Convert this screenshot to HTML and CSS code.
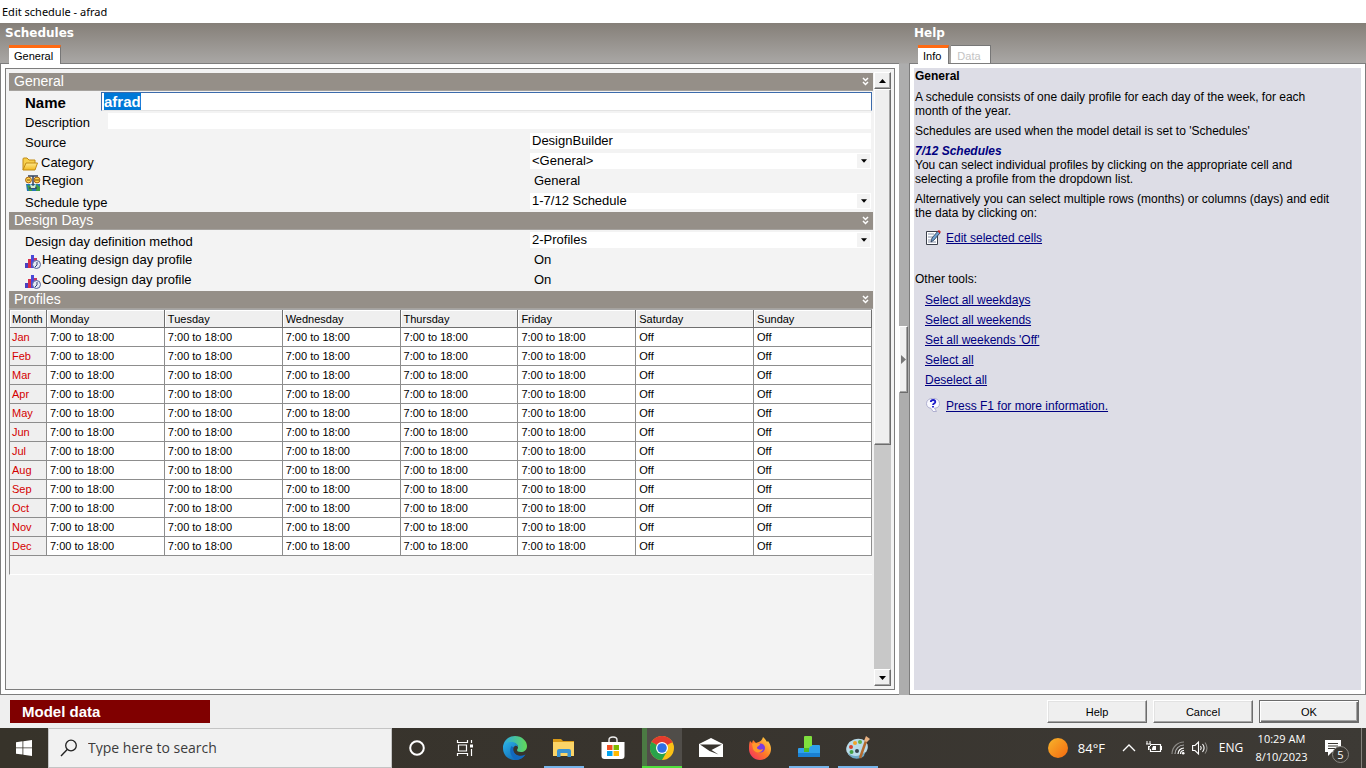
FILE: index.html
```html
<!DOCTYPE html>
<html lang="en">
<head>
<meta charset="utf-8">
<title>Edit schedule - afrad</title>
<link rel="stylesheet" href="styles.css">
</head>
<body>
<svg class="defs" aria-hidden="true">
  <defs>
    <linearGradient id="edgeA" x1="0" y1="0" x2="1" y2="1"><stop offset="0" stop-color="#2bb3e8"/><stop offset="1" stop-color="#0a56a8"/></linearGradient>
    <linearGradient id="edgeB" x1="0" y1="0" x2="1" y2="0"><stop offset="0" stop-color="#2aa8e6"/><stop offset="1" stop-color="#62d957"/></linearGradient>
    <linearGradient id="sun" x1="0" y1="0" x2="1" y2="1"><stop offset="0" stop-color="#f7b52c"/><stop offset="1" stop-color="#f4690f"/></linearGradient>
    <linearGradient id="fox" x1="1" y1="0" x2="0" y2="1"><stop offset="0" stop-color="#ffe14a"/><stop offset=".5" stop-color="#ff7a25"/><stop offset="1" stop-color="#f0246c"/></linearGradient>
    <linearGradient id="folderG" x1="0" y1="0" x2="0" y2="1"><stop offset="0" stop-color="#ffe98a"/><stop offset="1" stop-color="#f2b81f"/></linearGradient>
    <symbol id="chev" viewBox="0 0 7 9"><path d="M1 1l2.500 2.500L6 1M1 5l2.500 2.500L6 5" fill="none" stroke="#fff" stroke-width="1.500"/></symbol>
    <symbol id="down" viewBox="0 0 7 4"><path d="M0 0h7L3.500 4z"/></symbol>
    <symbol id="profile" viewBox="0 0 16 16"><path d="M0 9h4v5H0z" fill="#4a3fc0"/><path d="M3 5h4v9H3z" fill="#d8304a"/><path d="M6 1h3v13H6z" fill="#4a48d8"/><path d="M9 4h3v9H9z" fill="#c23a68"/><circle cx="11.500" cy="10.500" r="4" fill="#e4e9f6" stroke="#526399"/><path d="M12 8v3l-2 2" fill="none" stroke="#30406e"/></symbol>
  </defs>
</svg>
<header class="titlebar">Edit schedule - afrad</header>

<main class="workspace">
  <section class="pane">
    <div class="pane-head">
      <h1>Schedules</h1>
      <div class="tabs"><button class="tab active" type="button">General</button></div>
    </div>
    <div class="panel panel-left">
      <div class="frame">
        <div class="sheet">
          <h2 class="section">General <svg class="chev"><use href="#chev"/></svg></h2>
          <div class="fields">
            <div class="row row-name"><label class="strong" for="name">Name</label><input id="name" class="name" type="text" value="afrad" autofocus></div>
            <div class="row row-desc"><label for="desc">Description</label><input id="desc" type="text" value=""></div>
            <div class="row"><label for="source">Source</label><input id="source" type="text" value="DesignBuilder"></div>
            <div class="row"><label for="category" class="with-icon">
              <svg class="folder" viewBox="0 0 16 14"><path d="M1 13V2q0-1 1-1h3l2 2h6v3" fill="#f7cf4c" stroke="#c18a13"/><path d="M1 13L4 6h11.500L13 13z" fill="url(#folderG)" stroke="#c18a13"/></svg>Category</label>
              <div class="combo"><select id="category"><option>&lt;General&gt;</option></select><span class="arrow"><svg><use href="#down"/></svg></span></div></div>
            <div class="row"><span class="label with-icon raised">
              <svg class="icon" viewBox="0 0 16 16"><path d="M1 9h14v7H2z" fill="#2477b8"/><path d="M2 10l4 1 1 5H4zM11 9l4 3v4h-4z" fill="#3f9e45"/><path d="M3 1h10M8 1v10M4 13h8" stroke="#34435c" stroke-width="1.500"/><circle cx="3.500" cy="5" r="2.900" fill="#ffd54c" stroke="#a9610d"/><circle cx="12" cy="5" r="2.900" fill="#ffd54c" stroke="#a9610d"/><path d="M2 5h3M10 5h4" stroke="#7b4309"/><path d="M5 9l3 2 3-2-1 4H6z" fill="#d5edcf"/></svg>Region</span><span class="static">General</span></div>
            <div class="row"><label for="type">Schedule type</label>
              <div class="combo"><select id="type"><option>1-7/12 Schedule</option></select><span class="arrow"><svg><use href="#down"/></svg></span></div></div>
          </div>

          <h2 class="section">Design Days <svg class="chev"><use href="#chev"/></svg></h2>
          <div class="fields">
            <div class="row"><label for="method">Design day definition method</label>
              <div class="combo"><select id="method"><option>2-Profiles</option></select><span class="arrow"><svg><use href="#down"/></svg></span></div></div>
            <div class="row"><span class="label with-icon raised"><svg class="icon"><use href="#profile"/></svg>Heating design day profile</span><span class="static">On</span></div>
            <div class="row"><span class="label with-icon raised"><svg class="icon"><use href="#profile"/></svg>Cooling design day profile</span><span class="static">On</span></div>
          </div>

          <h2 class="section">Profiles <svg class="chev"><use href="#chev"/></svg></h2>
          <div class="grid-box">
            <table class="profiles">
              <thead><tr><th class="month">Month</th><th>Monday</th><th>Tuesday</th><th>Wednesday</th><th>Thursday</th><th>Friday</th><th>Saturday</th><th>Sunday</th></tr></thead>
              <tbody>
                <tr><th>Jan</th><td>7:00 to 18:00</td><td>7:00 to 18:00</td><td>7:00 to 18:00</td><td>7:00 to 18:00</td><td>7:00 to 18:00</td><td>Off</td><td>Off</td></tr>
                <tr><th>Feb</th><td>7:00 to 18:00</td><td>7:00 to 18:00</td><td>7:00 to 18:00</td><td>7:00 to 18:00</td><td>7:00 to 18:00</td><td>Off</td><td>Off</td></tr>
                <tr><th>Mar</th><td>7:00 to 18:00</td><td>7:00 to 18:00</td><td>7:00 to 18:00</td><td>7:00 to 18:00</td><td>7:00 to 18:00</td><td>Off</td><td>Off</td></tr>
                <tr><th>Apr</th><td>7:00 to 18:00</td><td>7:00 to 18:00</td><td>7:00 to 18:00</td><td>7:00 to 18:00</td><td>7:00 to 18:00</td><td>Off</td><td>Off</td></tr>
                <tr><th>May</th><td>7:00 to 18:00</td><td>7:00 to 18:00</td><td>7:00 to 18:00</td><td>7:00 to 18:00</td><td>7:00 to 18:00</td><td>Off</td><td>Off</td></tr>
                <tr><th>Jun</th><td>7:00 to 18:00</td><td>7:00 to 18:00</td><td>7:00 to 18:00</td><td>7:00 to 18:00</td><td>7:00 to 18:00</td><td>Off</td><td>Off</td></tr>
                <tr><th>Jul</th><td>7:00 to 18:00</td><td>7:00 to 18:00</td><td>7:00 to 18:00</td><td>7:00 to 18:00</td><td>7:00 to 18:00</td><td>Off</td><td>Off</td></tr>
                <tr><th>Aug</th><td>7:00 to 18:00</td><td>7:00 to 18:00</td><td>7:00 to 18:00</td><td>7:00 to 18:00</td><td>7:00 to 18:00</td><td>Off</td><td>Off</td></tr>
                <tr><th>Sep</th><td>7:00 to 18:00</td><td>7:00 to 18:00</td><td>7:00 to 18:00</td><td>7:00 to 18:00</td><td>7:00 to 18:00</td><td>Off</td><td>Off</td></tr>
                <tr><th>Oct</th><td>7:00 to 18:00</td><td>7:00 to 18:00</td><td>7:00 to 18:00</td><td>7:00 to 18:00</td><td>7:00 to 18:00</td><td>Off</td><td>Off</td></tr>
                <tr><th>Nov</th><td>7:00 to 18:00</td><td>7:00 to 18:00</td><td>7:00 to 18:00</td><td>7:00 to 18:00</td><td>7:00 to 18:00</td><td>Off</td><td>Off</td></tr>
                <tr><th>Dec</th><td>7:00 to 18:00</td><td>7:00 to 18:00</td><td>7:00 to 18:00</td><td>7:00 to 18:00</td><td>7:00 to 18:00</td><td>Off</td><td>Off</td></tr>
              </tbody>
            </table>
          </div>
        </div>
        <div class="scroll">
          <button class="scroll-btn" type="button" aria-label="Scroll up"><svg viewBox="0 0 7 4"><path d="M0 4h7L3.500 0z"/></svg></button>
          <div class="thumb"></div>
          <div class="track"></div>
          <button class="scroll-btn" type="button" aria-label="Scroll down"><svg viewBox="0 0 7 4"><path d="M0 0h7L3.500 4z"/></svg></button>
        </div>
      </div>
    </div>
  </section>

  <div class="splitter"><button class="handle" type="button" aria-label="Collapse help"><svg viewBox="0 0 5 9"><path d="M0 0v9l5-4.500z" fill="#777"/></svg></button></div>

  <aside class="pane">
    <div class="pane-head">
      <h1>Help</h1>
      <div class="tabs"><button class="tab active" type="button">Info</button><button class="tab" type="button" disabled>Data</button></div>
    </div>
    <div class="panel panel-right">
      <article class="info">
        <h3>General</h3>
        <p>A schedule consists of one daily profile for each day of the week, for each month of the year.</p>
        <p>Schedules are used when the model detail is set to 'Schedules'</p>
        <h4>7/12 Schedules</h4>
        <p>You can select individual profiles by clicking on the appropriate cell and selecting a profile from the dropdown list.</p>
        <p>Alternatively you can select multiple rows (months) or columns (days) and edit the data by clicking on:</p>
        <div class="action edit">
          <svg viewBox="0 0 16 16"><path d="M1.500 1.500h11v13h-11z" fill="#fff" stroke="#3d414c"/><path d="M3 4h6M3 7h5M3 10h3M3 12h8" stroke="#8a93ab"/><path d="M6 12l1-4 6-7 2 2-6 7z" fill="#6f9fd0" stroke="#23334d" stroke-width=".8"/><path d="M12.500 1L14 0l2 2-1.500 1.500z" fill="#d22626"/></svg>
          <a href="#edit">Edit selected cells</a>
        </div>
        <p class="other">Other tools:</p>
        <ul>
          <li><a href="#weekdays">Select all weekdays</a></li>
          <li><a href="#weekends">Select all weekends</a></li>
          <li><a href="#off">Set all weekends 'Off'</a></li>
          <li><a href="#all">Select all</a></li>
          <li><a href="#none">Deselect all</a></li>
        </ul>
        <div class="action more">
          <svg viewBox="0 0 16 16"><path d="M1.500 5.500c0-7 13-7 13 0 0 3-2 4.500-4 4.500h-1l2 3.500H8L6 10.300C3 10 1.500 8 1.500 5.500z" fill="#f9f9ff" stroke="#a9a9cc" stroke-width=".9"/><path d="M5.800 4C6 1.300 10.300 1.300 10.300 4 10.300 5.600 8 5.600 8 7M8 8v1.600" fill="none" stroke="#1a1ac8" stroke-width="1.800"/></svg>
          <a href="#f1">Press F1 for more information.</a>
        </div>
      </article>
    </div>
  </aside>
</main>

<footer class="dialog-bar">
  <div class="badge">Model data</div>
  <div class="buttons">
    <button type="button">Help</button>
    <button type="button">Cancel</button>
    <button type="button" class="default">OK</button>
  </div>
</footer>

<nav class="taskbar">
  <button class="start" type="button" aria-label="Start"><svg viewBox="0 0 16 16"><path d="M0 2.200L6.500 1.300v6.200H0zM7.300 1.200L16 0v7.500H7.300zM0 8.300h6.500v6.300L0 13.700zM7.300 8.300H16V16l-8.700-1.200z" fill="#fff"/></svg></button>
  <div class="search">
    <svg viewBox="0 0 18 18"><circle cx="11" cy="6.500" r="5.300" fill="none" stroke="#222" stroke-width="1.300"/><path d="M7.200 10.500L1 17" stroke="#222" stroke-width="1.400"/></svg>
    <input type="text" placeholder="Type here to search" aria-label="Type here to search">
  </div>
  <div class="apps">
    <button class="app" type="button" aria-label="Cortana"><svg viewBox="0 0 24 24"><circle cx="12" cy="12" r="6.800" fill="none" stroke="#fff" stroke-width="2"/></svg></button>
    <button class="app" type="button" aria-label="Task view"><svg viewBox="0 0 24 24"><path d="M3.500 4v2.500h10V4M3.500 20v-2.500h10V20M4.500 9h8v6h-8zM17.500 4v3M17.500 13v7" fill="none" stroke="#fff" stroke-width="1.200"/><path d="M16 8.500h3v3h-3z" fill="#fff"/></svg></button>
    <button class="app" type="button" aria-label="Edge"><svg viewBox="0 0 24 24"><path d="M0 12C0 5 5 0 12 0c7 0 12 5 12 10 0 4-3 6-6 6-3 0-4-1-4-2 0-.7 1-1 1-3 0-2-2-4-5-4-4 0-7 2-10 5z" fill="url(#edgeB)"/><path d="M0 12c0-3 3-6 8-6 4 0 7 2 7 5-1-1-2-1.500-3-1-2 1-2.500 3-2 5 1 3 4 5 8 5 2 0 3-.5 4.500-1.500C20 22 16.500 24 12 24 5 24 0 19 0 12z" fill="url(#edgeA)"/><path d="M8.500 10c-3 5-.5 11 4.500 13.900 4 0 7.500-2 9.500-5.400C16 22 9 18 10.500 11.500z" fill="#1268be"/></svg></button>
    <button class="app open" type="button" aria-label="File Explorer"><svg viewBox="0 0 24 24"><path d="M1 3h8l2 2h11v5H1z" fill="#d99a18"/><path d="M1 6h21v14H1z" fill="#fbd467"/><path d="M5 21v-6q0-2 2-2h10q2 0 2 2v6h-3.500v-4h-7v4z" fill="#3a93d2"/></svg></button>
    <button class="app" type="button" aria-label="Microsoft Store"><svg viewBox="0 0 24 24"><path d="M8 7V4q0-3 4-3t4 3v3" fill="none" stroke="#eee" stroke-width="1.400"/><path d="M.500 6h23v14q0 3-3 3h-17q-3 0-3-3z" fill="#fff"/><path d="M6 9h5.500v5H6z" fill="#f25022"/><path d="M12.500 9H18v5h-5.500z" fill="#7fba00"/><path d="M6 15h5.500v5H6z" fill="#00a4ef"/><path d="M12.500 15H18v5h-5.500z" fill="#ffb900"/></svg></button>
    <button class="app chrome" type="button" aria-label="Chrome"><svg viewBox="0 0 24 24"><circle cx="12" cy="12" r="12" fill="#fbc116"/><path d="M12 12L1.600 6A12 12 0 0 1 22.400 6z" fill="#e33b2e"/><path d="M1.600 6A12 12 0 0 0 12 24l5.200-9L12 12z" fill="#29a34a"/><path d="M12 6.500h10.700L22.400 6H12z" fill="#e33b2e"/><circle cx="12" cy="12" r="6" fill="#fff"/><circle cx="12" cy="12" r="4.800" fill="#2f6fe4"/></svg></button>
    <button class="app" type="button" aria-label="Mail"><svg viewBox="0 0 24 24"><path d="M0 8l12-6 12 6v13H0z" fill="#fff"/><path d="M1 8.500h22L12.500 14l7 4.500-9-3.500z" fill="#38342e"/></svg></button>
    <button class="app" type="button" aria-label="Firefox"><svg viewBox="0 0 24 24"><path d="M2 5l2 2 1-3 3 3c3-1 6-2 7-6 2 2 3 3 4 5l1-1c2 3 3 5 3 8a11 11 0 0 1-22 0C1 10 1 7 2 5z" fill="url(#fox)"/><circle cx="12.500" cy="12" r="4.500" fill="#7a3be0"/><path d="M4 8c3-2 5 0 8 0 0 2-3 2-3 4 1 2 4 2 6 1-1 4-8 5-10 0z" fill="#ff9a2a"/></svg></button>
    <button class="app open" type="button" aria-label="DesignBuilder"><svg viewBox="0 0 24 24"><path d="M1 13q0-1 1-1h9v4h1V11q0-2 2-2h8q1 0 1 1v11H2q-1 0-1-1z" fill="#2fa0ec"/><path d="M1 17h22v4H1z" fill="#1a80d2"/><path d="M7 1q0-1 1-1h6q1 0 1 1v9q-3 0-3 4v2H7z" fill="#7fe03e"/><path d="M7 12h5v4H7z" fill="#4dbb23"/></svg></button>
    <button class="app open" type="button" aria-label="Paint"><svg viewBox="0 0 24 24"><ellipse cx="11" cy="12" rx="11" ry="9" transform="rotate(-20 11 12)" fill="#b9dcea"/><path d="M2 17c5 4 11 4 17-1l-1 4c-5 4-13 4-16-3z" fill="#6ea8c6"/><circle cx="5" cy="11" r="2" fill="#d8432d"/><circle cx="9" cy="7" r="2" fill="#f1a32b"/><circle cx="14" cy="6" r="2" fill="#5fb04b"/><circle cx="5.500" cy="16" r="2" fill="#43a047"/><circle cx="11" cy="15" r="2" fill="#34404a"/><path d="M14 22L20 5" stroke="#b36a2e" stroke-width="2.500"/><path d="M18 5l2-5 4 3-3 3z" fill="#e8b183"/></svg></button>
  </div>
  <div class="tray">
    <button class="weather" type="button"><svg viewBox="0 0 20 20"><circle cx="10" cy="10" r="10" fill="url(#sun)"/></svg>84°F</button>
    <button class="t24" type="button" aria-label="Show hidden icons"><svg viewBox="0 0 16 16"><path d="M2 11l6-6 6 6" fill="none" stroke="#fff" stroke-width="1.300"/></svg></button>
    <button class="t26" type="button" aria-label="Battery"><svg viewBox="0 0 16 16"><path d="M5 4.500h9.500v7H4.500V9M15.500 6v4" fill="none" stroke="#fff" stroke-width="1.200"/><path d="M7 6h3v4H6V8.500z" fill="#fff"/><path d="M1 1v3M4 1v3M0 4h5v1L3 7v3M2.500 6v4" fill="none" stroke="#fff"/></svg></button>
    <button class="t22" type="button" aria-label="Network"><svg viewBox="0 0 16 16"><g fill="none" stroke-width="1.200"><path d="M2 14A12 12 0 0 1 14 2" stroke="#8b8985"/><path d="M5 14a9 9 0 0 1 9-9" stroke="#aaa"/><path d="M8 14a6 6 0 0 1 6-6M10.500 14a3.500 3.500 0 0 1 3.500-3.500" stroke="#fff"/></g><circle cx="13.200" cy="13.200" r="1.300" fill="#fff"/></svg></button>
    <button class="t22" type="button" aria-label="Volume"><svg viewBox="0 0 16 16"><g fill="none" stroke="#fff" stroke-width="1.100"><path d="M.600 5.500h2.400l3.500-3.500v12L3 10.500H.600zM8.500 6q1.500 2 0 4M10.500 4q3.200 4 0 8"/><path d="M13 2.500q4 5.500 0 11" stroke="#8d8b87"/></g></svg></button>
    <button class="lang" type="button">ENG</button>
    <button class="clock" type="button"><span>10:29 AM</span><span>8/10/2023</span></button>
    <button class="notify" type="button" aria-label="5 notifications"><svg viewBox="0 0 18 18"><path d="M1 1h16v12H8l-4 4v-4H1z" fill="#fff"/><path d="M4 4.500h10M4 7h10M4 9.500h7" stroke="#3b3833" stroke-width="1.100"/></svg><span class="count">5</span></button>
    <button class="desktop" type="button" aria-label="Show desktop"></button>
  </div>
</nav>
<script src="script.js"></script>
</body>
</html>
```
FILE: script.js
```js
// Opens the dialog with the schedule name ready to be replaced.
const nameField = document.getElementById('name');
nameField.focus();
nameField.select();
```
FILE: styles.css
```css
* { box-sizing: border-box; }

body {
  margin: 0;
  height: 100vh;
  display: flex;
  flex-direction: column;
  overflow: hidden;
  background: #efefef;
  color: #000;
  font: 13px/16px "Liberation Sans", Arial, sans-serif;
}

button, input, select { font: inherit; color: inherit; border-radius: 0; margin: 0; }
button { padding: 0; border: 0; background: none; }
svg { display: block; flex: none; }
.defs { position: absolute; width: 0; height: 0; }

.titlebar {
  flex: none;
  height: 23px;
  padding: 0 2px;
  background: #fff;
  font: 11px/23px "Noto Sans", "Open Sans", sans-serif;
}

/* Workspace */
.workspace {
  flex: 1;
  min-height: 0;
  display: grid;
  grid-template-columns: 899fr 10px 457fr;
  background: linear-gradient(#857f78, #a9a7a5 40px, #adadad 41px);
}
.pane { display: flex; flex-direction: column; min-width: 0; min-height: 0; }
.pane-head { flex: none; height: 41px; padding: 0 5px; display: flex; flex-direction: column; justify-content: space-between; z-index: 1; }
h1 { margin: 0; color: #fff; font: bold 12px/20px "DejaVu Sans", Verdana, sans-serif; }
.tabs { display: flex; gap: 2px; padding-left: 4px; }
.tab {
  height: 19px;
  padding: 2px 7px 0 5px;
  border-top: 1px solid #777;
  border-right: 1px solid #777;
  background: #fff;
  font-size: 11px;
}
.tab:disabled { color: #c4c4c4; height: 18px; align-self: flex-start; padding: 2px 9px 0 6px; }
.tab.active { border-top: 3px solid #ff6a13; padding-top: 0; }

.panel { flex: 1; min-height: 0; margin-top: -1px; background: #fff; border: 1px solid #7d7d7d; padding: 4px; }
.panel-left { border-right: 0; }
.frame { height: 100%; display: flex; border: 1px solid #7d7d7d; padding: 3px; background: #f3f3f3; }
.sheet { flex: 1; min-width: 0; padding-top: 1px; }

.section {
  display: flex;
  justify-content: space-between;
  align-items: center;
  height: 18px;
  margin: 0;
  padding: 0 4px 1px 5px;
  background: #958f88;
  border-bottom: 1px solid #a5a29e;
  color: #fff;
  font-size: 14px;
  line-height: 16px;
  font-weight: normal;
}
.chev { width: 7px; height: 9px; }

.fields { padding: 0 2px 1px 0; }
.row { display: grid; grid-template-columns: 521fr 341fr; align-items: center; height: 20px; }
.row-name { grid-template-columns: 92px 1fr; margin-right: -1px; }
.row-desc { grid-template-columns: 99px 1fr; }
.row label, .label { padding: 3px 0 0 16px; }
.row .strong { font-size: 15px; font-weight: bold; }
.row .with-icon { display: flex; align-items: center; gap: 1px; }
.row label.with-icon { padding-left: 13px; gap: 3px; }
.row .raised { padding-top: 0; }
.icon { width: 16px; height: 16px; margin-top: 3px; }
.folder { width: 16px; height: 14px; margin-top: 2px; }
.row input, .row select {
  width: 100%;
  height: 16px;
  padding: 0 2px;
  border: 0;
  outline: 0;
  background: #fff;
  appearance: none;
}
.row .name { height: 19px; border: 1px solid #3c6bab; border-bottom-color: #e4e4e4; font-size: 15px; font-weight: bold; }
.name::selection { background: #0078d7; color: #fff; }
.static { padding-left: 4px; }
.combo { position: relative; }
.combo select { display: block; }
.arrow {
  position: absolute;
  top: 1px;
  right: 1px;
  width: 13px;
  height: 14px;
  background: #f3f3f3;
  display: grid;
  place-items: center;
  pointer-events: none;
}
.arrow svg { width: 6px; height: 4px; }

.grid-box { border-left: 1px solid #8d8d8d; border-top: 1px solid #a5a5a5; border-bottom: 1px solid #fff; padding-bottom: 18px; margin-right: 1px; }
.profiles { width: 100%; table-layout: fixed; border-spacing: 0; font-size: 11px; line-height: 14px; }
.profiles th, .profiles td {
  height: 19px;
  padding: 0 0 0 3px;
  border-right: 1px solid #8d8d8d;
  border-bottom: 1px solid #8d8d8d;
  background: #fff;
  text-align: left;
  font-weight: normal;
}
.profiles thead th { height: 18px; background: #efefef; border-color: #6f6f6f; box-shadow: inset 1px 1px #fff; }
.profiles .month { width: 37px; padding-left: 2px; }
.profiles tbody th { background: #efefef; color: #d40000; padding-left: 2px; }

.scroll { width: 17px; margin-left: 1px; display: flex; flex-direction: column; background: #c8c8c8; }
.scroll-btn, .thumb, .handle {
  background: #efefef;
  border: 1px solid #fff;
  border-right-color: #6c6c6c;
  border-bottom-color: #6c6c6c;
  box-shadow: inset -1px -1px #a5a5a5;
}
.scroll-btn { flex: none; height: 17px; display: grid; place-items: center; }
.scroll-btn svg { width: 7px; height: 4px; }
.thumb { flex: 355; }
.track { flex: 224; }

.splitter { display: flex; align-items: center; }
.handle { width: 9px; height: 67px; display: grid; place-items: center; }
.handle svg { width: 5px; height: 9px; }

/* Help */
.info { height: 100%; padding: 1px 24px 0 1px; background: #dddde6; font-size: 12px; line-height: 14px; }
.info h3 { margin: 0 0 7px; font-size: 12px; }
.info h4 { margin: 0; font-size: 12px; font-style: italic; color: #000080; }
.info p { margin: 0 0 6px; }
.info a { color: #000080; }
.info ul { list-style: none; margin: 0; padding: 0 0 0 10px; }
.info li { height: 20px; padding-top: 3px; }
.info .other { margin: 26px 0 4px; }
.action { display: flex; gap: 5px; padding-left: 10px; align-items: center; }
.action svg { width: 16px; height: 16px; }
.edit { margin-top: 10px; }
.more { margin-top: 8px; }

/* Dialog buttons */
.dialog-bar { flex: none; height: 33px; padding: 0 7px 0 10px; display: flex; justify-content: space-between; align-items: center; }
.badge { width: 200px; height: 23px; padding-left: 12px; background: #800000; color: #fff; font-size: 15px; font-weight: bold; line-height: 24px; }
.buttons { display: flex; gap: 6px; }
.buttons button {
  width: 100px;
  height: 23px;
  background: #efefef;
  border: 1px solid #fff;
  border-right-color: #6c6c6c;
  border-bottom-color: #6c6c6c;
  box-shadow: inset -1px -1px #a5a5a5, inset 1px 1px #e2e2e2;
  font-size: 11px;
}
.buttons .default { border-color: #6c6c6c; box-shadow: inset 1px 1px #fff, inset -1px -1px #6c6c6c, inset -2px -2px #a5a5a5; }

/* Taskbar */
.taskbar { flex: none; height: 40px; display: flex; background: linear-gradient(90deg, #37332a, #38342e 50%, #3d3a35); color: #fff; font-family: "Open Sans", "Noto Sans", sans-serif; }
.taskbar button { display: flex; align-items: center; justify-content: center; }
.start { width: 48px; }
.start svg { width: 16px; height: 16px; }
.search { width: 344px; display: flex; align-items: center; gap: 8px; padding-left: 11px; background: #f1f1f1; border: 1px solid #c4c4c4; }
.search svg { width: 18px; height: 18px; }
.search input { flex: 1; min-width: 0; border: 0; outline: 0; padding: 0 2px; background: none; font-size: 14px; }
.search input::placeholder { color: #3c3c3c; opacity: 1; }
.apps { display: flex; }
.app { width: 49px; height: 40px; }
.app svg { width: 24px; height: 24px; }
.app.open { background: linear-gradient(#76b4ea, #76b4ea) center bottom / 40px 2px no-repeat; }
.app.chrome { background: linear-gradient(#4fe03c, #4fe03c) center bottom / 40px 2px no-repeat, linear-gradient(90deg, #4b7a43 5px, #504d49 5px) center / 40px 40px no-repeat; }
.tray { margin-left: auto; display: flex; font-size: 12px; }
.weather { gap: 10px; padding-right: 12px; font-size: 13px; }
.taskbar .weather svg { width: 20px; height: 20px; }
.tray svg { width: 16px; height: 16px; }
.t22 { width: 22px; }
.t24 { width: 24px; }
.t26 { width: 26px; }
.lang { width: 40px; }
.taskbar .clock { width: 61px; flex-direction: column; line-height: 18px; font-size: 11px; }
.notify { position: relative; width: 49px; }
.notify svg { width: 18px; height: 18px; margin-right: 8px; }
.count {
  position: absolute;
  left: 20px;
  top: 18px;
  width: 17px;
  height: 17px;
  border: 1px solid #8a8884;
  border-radius: 50%;
  background: #3b3833;
  font-size: 11px;
  line-height: 15px;
  text-align: center;
}
.desktop { width: 5px; }
.taskbar .desktop { border-left: 1px solid #85827d; }
```
